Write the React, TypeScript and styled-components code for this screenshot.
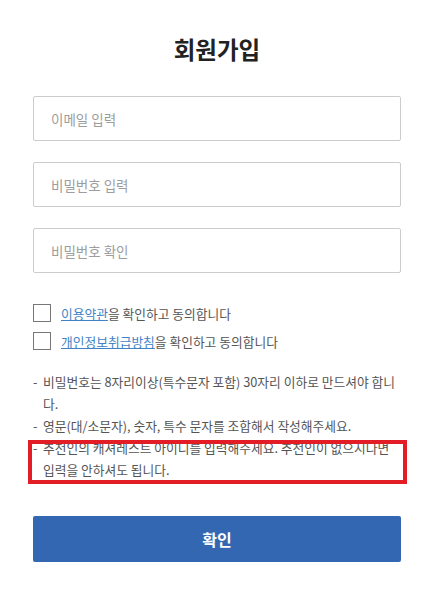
import React from "react";
import styled, { createGlobalStyle } from "styled-components";

const GlobalStyle = createGlobalStyle`
  html, body {
    margin: 0;
    padding: 0;
    background: #ffffff;
  }
  body {
    font-family: "Noto Sans CJK KR", "Noto Sans", sans-serif;
    color: #555555;
  }
  * {
    box-sizing: border-box;
  }
`;

const SignUpContainer = styled.div`
  width: 432px;
  padding: 34px 31px 40px 33px;
  display: flex;
  flex-direction: column;

  h1 {
    margin: 0;
    height: 30px;
    line-height: 30px;
    font-size: 23.5px;
    font-weight: 700;
    text-align: center;
    color: #222222;
  }
`;

const Form = styled.form`
  display: flex;
  flex-direction: column;
  margin-top: 32px;
`;

const InputGroup = styled.div`
  display: flex;
  flex-direction: column;
  gap: 21px;
`;

const TextInput = styled.input`
  height: 45px;
  padding: 0 17px;
  border: 1px solid #cccccc;
  border-radius: 2px;
  font-family: inherit;
  font-size: 13.5px;
  color: #333333;
  outline: none;

  &::placeholder {
    color: #9d9d9d;
  }
`;

const AgreeList = styled.div`
  display: flex;
  flex-direction: column;
  gap: 10px;
  margin-top: 31px;
`;

const AgreeRow = styled.label`
  display: flex;
  align-items: center;
  height: 18px;
  gap: 10px;
  font-size: 12.75px;
  color: #555555;
  cursor: pointer;

  a {
    color: #3f83c6;
    text-decoration: underline;
  }
`;

const CheckBox = styled.input`
  appearance: none;
  width: 18px;
  height: 18px;
  margin: 0;
  border: 1px solid #777777;
  background: #ffffff;
  cursor: pointer;
`;

const NoticeList = styled.ul`
  list-style: none;
  margin: 21px 0 0;
  padding: 0;
  font-size: 12.75px;
  line-height: 22px;
  color: #555555;
`;

const NoticeItem = styled.li<{ $marked?: boolean }>`
  position: relative;
  display: flex;

  &::after {
    content: "";
    display: ${(p) => (p.$marked ? "block" : "none")};
    position: absolute;
    top: 3px;
    bottom: -3px;
    left: -5px;
    right: -6px;
    border: 4px solid #e21d25;
    pointer-events: none;
  }
`;

const Dash = styled.span`
  flex: 0 0 10px;
`;

const SubmitButton = styled.button`
  height: 46px;
  margin-top: 35px;
  border: none;
  border-radius: 2px;
  background-color: #3467b1;
  color: #ffffff;
  font-family: inherit;
  font-size: 16px;
  font-weight: 700;
  cursor: pointer;
`;

const notices = [
  { text: "비밀번호는 8자리이상(특수문자 포함) 30자리 이하로 만드셔야 합니다." },
  { text: "영문(대/소문자), 숫자, 특수 문자를 조합해서 작성해주세요." },
  {
    text: "추천인의 캐셔레스트 아이디를 입력해주세요. 추천인이 없으시다면 입력을 안하셔도 됩니다.",
    marked: true,
  },
];

const App: React.FC = () => {
  return (
    <>
      <GlobalStyle />
      <SignUpContainer>
        <h1>회원가입</h1>
        <Form onSubmit={(e) => e.preventDefault()}>
          <InputGroup>
            <TextInput type="text" placeholder="이메일 입력" />
            <TextInput type="password" placeholder="비밀번호 입력" />
            <TextInput type="password" placeholder="비밀번호 확인" />
          </InputGroup>

          <AgreeList>
            <AgreeRow>
              <CheckBox type="checkbox" />
              <span>
                <a href="#">이용약관</a>을 확인하고 동의합니다
              </span>
            </AgreeRow>
            <AgreeRow>
              <CheckBox type="checkbox" />
              <span>
                <a href="#">개인정보취급방침</a>을 확인하고 동의합니다
              </span>
            </AgreeRow>
          </AgreeList>

          <NoticeList>
            {notices.map((n, i) => (
              <NoticeItem key={i} $marked={n.marked}>
                <Dash>-</Dash>
                <span>{n.text}</span>
              </NoticeItem>
            ))}
          </NoticeList>

          <SubmitButton type="submit">확인</SubmitButton>
        </Form>
      </SignUpContainer>
    </>
  );
};

export default App;
